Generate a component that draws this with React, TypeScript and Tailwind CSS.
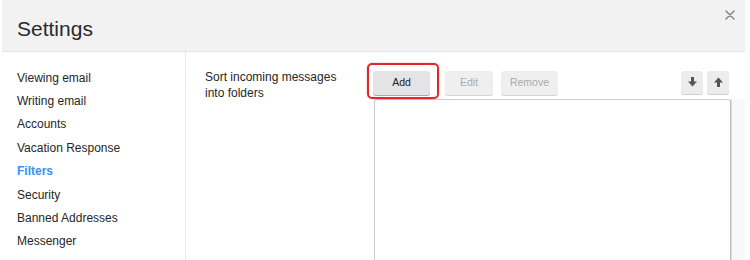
import React from "react";

const items = [
  "Viewing email",
  "Writing email",
  "Accounts",
  "Vacation Response",
  "Filters",
  "Security",
  "Banned Addresses",
  "Messenger",
];

function ArrowDown() {
  return (
    <svg width="9" height="10" viewBox="0 0 9 10">
      <rect x="3" y="0" width="3" height="5" fill="#555" />
      <polygon points="0,4.5 9,4.5 4.5,9.5" fill="#555" />
    </svg>
  );
}

function ArrowUp() {
  return (
    <svg width="9" height="10" viewBox="0 0 9 10">
      <rect x="3" y="5" width="3" height="5" fill="#555" />
      <polygon points="0,5.5 9,5.5 4.5,0.5" fill="#555" />
    </svg>
  );
}

export default function App() {
  return (
    <div className="w-[750px] h-[260px] bg-white overflow-hidden font-['Liberation_Sans',Arial,sans-serif] text-[#333]">
      <div className="ml-[2px] w-[743px] h-full flex flex-col">
        <div className="h-[52px] shrink-0 bg-[#f2f2f2] border-b border-[#e2e2e2] flex items-start justify-between pl-[15px] pr-[10px]">
          <div className="pt-[18px] text-[21px] leading-none text-[#2a2a2a]">Settings</div>
          <svg className="mt-[10px]" width="10" height="10" viewBox="0 0 10 10">
            <path d="M1 1 L9 9 M9 1 L1 9" stroke="#8a8a8a" strokeWidth="1.6" strokeLinecap="round" />
          </svg>
        </div>
        <div className="flex flex-1 min-h-0">
          <div className="w-[184px] shrink-0 border-r border-[#e8e8e8] pt-[14px] pl-[15px]">
            {items.map((t) => (
              <div
                key={t}
                className={
                  t === "Filters"
                    ? "h-[23.4px] flex items-center text-[12px] font-bold text-[#3b8ef3]"
                    : "h-[23.4px] flex items-center text-[12px] text-[#262626]"
                }
              >
                {t}
              </div>
            ))}
          </div>
          <div className="flex flex-1 pl-[19px]">
            <div className="w-[168px] shrink-0 pt-[17px] text-[12px] leading-[16px] text-[#262626]">
              Sort incoming messages
              <br />
              into folders
            </div>
            <div className="flex flex-col flex-1 pt-[19px]">
              <div className="h-[24px] flex items-center pr-[15px]">
                <div className="relative">
                  <div className="w-[57px] h-[24px] flex items-center justify-center bg-[#e4e4e7] rounded-[3px] shadow-[0_1px_0_#a9a9ad] text-[10.5px] text-[#222]">
                    Add
                  </div>
                  <div className="absolute -left-[6px] -top-[8px] w-[72px] h-[36px] border-2 border-[#e3262b] rounded-[5px] shadow-[0_0_2px_rgba(200,0,0,0.35)]" />
                </div>
                <div className="ml-[15px] w-[48px] h-[24px] flex items-center justify-center bg-[#efeff0] rounded-[3px] shadow-[0_1px_0_#d6d6d8] text-[10.5px] text-[#ababab]">
                  Edit
                </div>
                <div className="ml-[8px] w-[57px] h-[24px] flex items-center justify-center bg-[#efeff0] rounded-[3px] shadow-[0_1px_0_#d6d6d8] text-[10.5px] text-[#ababab]">
                  Remove
                </div>
                <div className="ml-auto -mt-[2px] w-[22px] h-[23px] flex items-center justify-center bg-[#ececed] rounded-[3px] shadow-[0_1px_0_#d0d0d2]">
                  <ArrowDown />
                </div>
                <div className="ml-[4px] -mt-[2px] mr-[1px] w-[22px] h-[23px] flex items-center justify-center bg-[#ececed] rounded-[3px] shadow-[0_1px_0_#d0d0d2]">
                  <ArrowUp />
                </div>
              </div>
              <div className="flex flex-1 mt-[4px]">
                <div className="flex-1 ml-[1px] border border-b-0 border-[#cfcfcf] border-r-[#bdbdbd] rounded-t-[3px] bg-white" />
                <div className="w-[14px] bg-[#f8f8f8] border-l border-[#dcdcdc]" />
              </div>
            </div>
          </div>
        </div>
      </div>
    </div>
  );
}
